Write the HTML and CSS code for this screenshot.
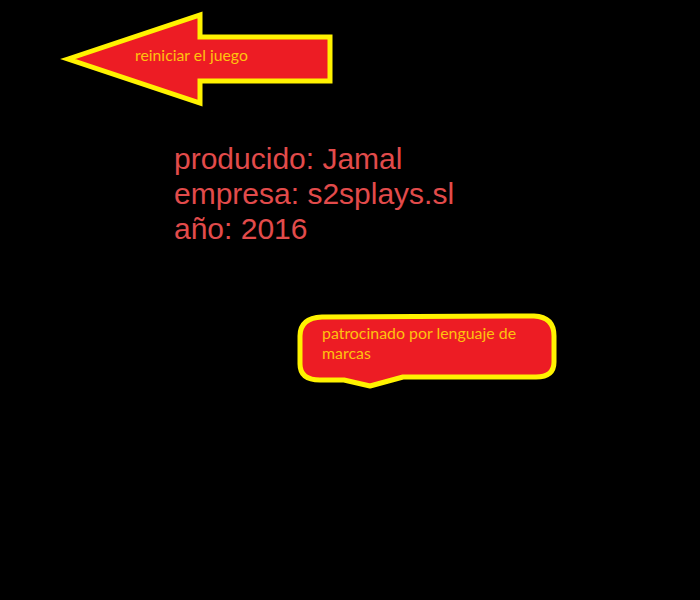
FILE: index.html
```html
<!DOCTYPE html>
<html lang="es">
<head>
<meta charset="utf-8">
<title>Créditos</title>
<link rel="stylesheet" href="styles.css">
</head>
<body>
<main class="canvas">
  <a class="restart" href="#">
    <svg class="shape" width="340" height="120" viewBox="0 0 340 120">
      <polygon points="68,59 200,15 200,37 330,37 330,81 200,81 200,103" fill="#ED1C24" stroke="#FFF200" stroke-width="5" stroke-linejoin="miter"/>
    </svg>
    <span class="restart-label">reiniciar el juego</span>
  </a>

  <section class="credits">
    <p>producido: Jamal</p>
    <p>empresa: s2splays.sl</p>
    <p>año: 2016</p>
  </section>

  <div class="bubble">
    <svg class="shape" width="600" height="400" viewBox="0 0 600 400">
      <path d="M300,336 Q300,318 322,317 L534,316 Q554,317 554,336 L554,362 Q554,377 536,377 L403,377 L370,386 L344,380 L320,380 Q300,380 300,364 Z" fill="#ED1C24" stroke="#FFF200" stroke-width="5" stroke-linejoin="round"/>
    </svg>
    <p class="bubble-text">patrocinado por lenguaje de marcas</p>
  </div>
</main>
</body>
</html>
```
FILE: styles.css
```css
html, body {
  margin: 0;
  padding: 0;
  background: #000;
}
.canvas {
  position: relative;
  width: 700px;
  height: 600px;
  overflow: hidden;
  background: #000;
}
.shape {
  position: absolute;
  left: 0;
  top: 0;
}
.restart {
  text-decoration: none;
}
.restart-label {
  position: absolute;
  left: 135px;
  top: 46px;
  font-family: Lato, "Open Sans", sans-serif;
  font-size: 15.8px;
  line-height: 18px;
  color: #FFC20E;
  white-space: nowrap;
}
.credits {
  position: absolute;
  left: 174px;
  top: 141px;
  font-family: "Liberation Sans", Arial, sans-serif;
  font-size: 30px;
  line-height: 35px;
  color: #E24B4B;
}
.credits p {
  margin: 0;
}
.bubble-text {
  position: absolute;
  left: 322px;
  top: 323px;
  width: 215px;
  margin: 0;
  font-family: Lato, "Open Sans", sans-serif;
  font-size: 15.9px;
  line-height: 20px;
  color: #FFC20E;
}
```
